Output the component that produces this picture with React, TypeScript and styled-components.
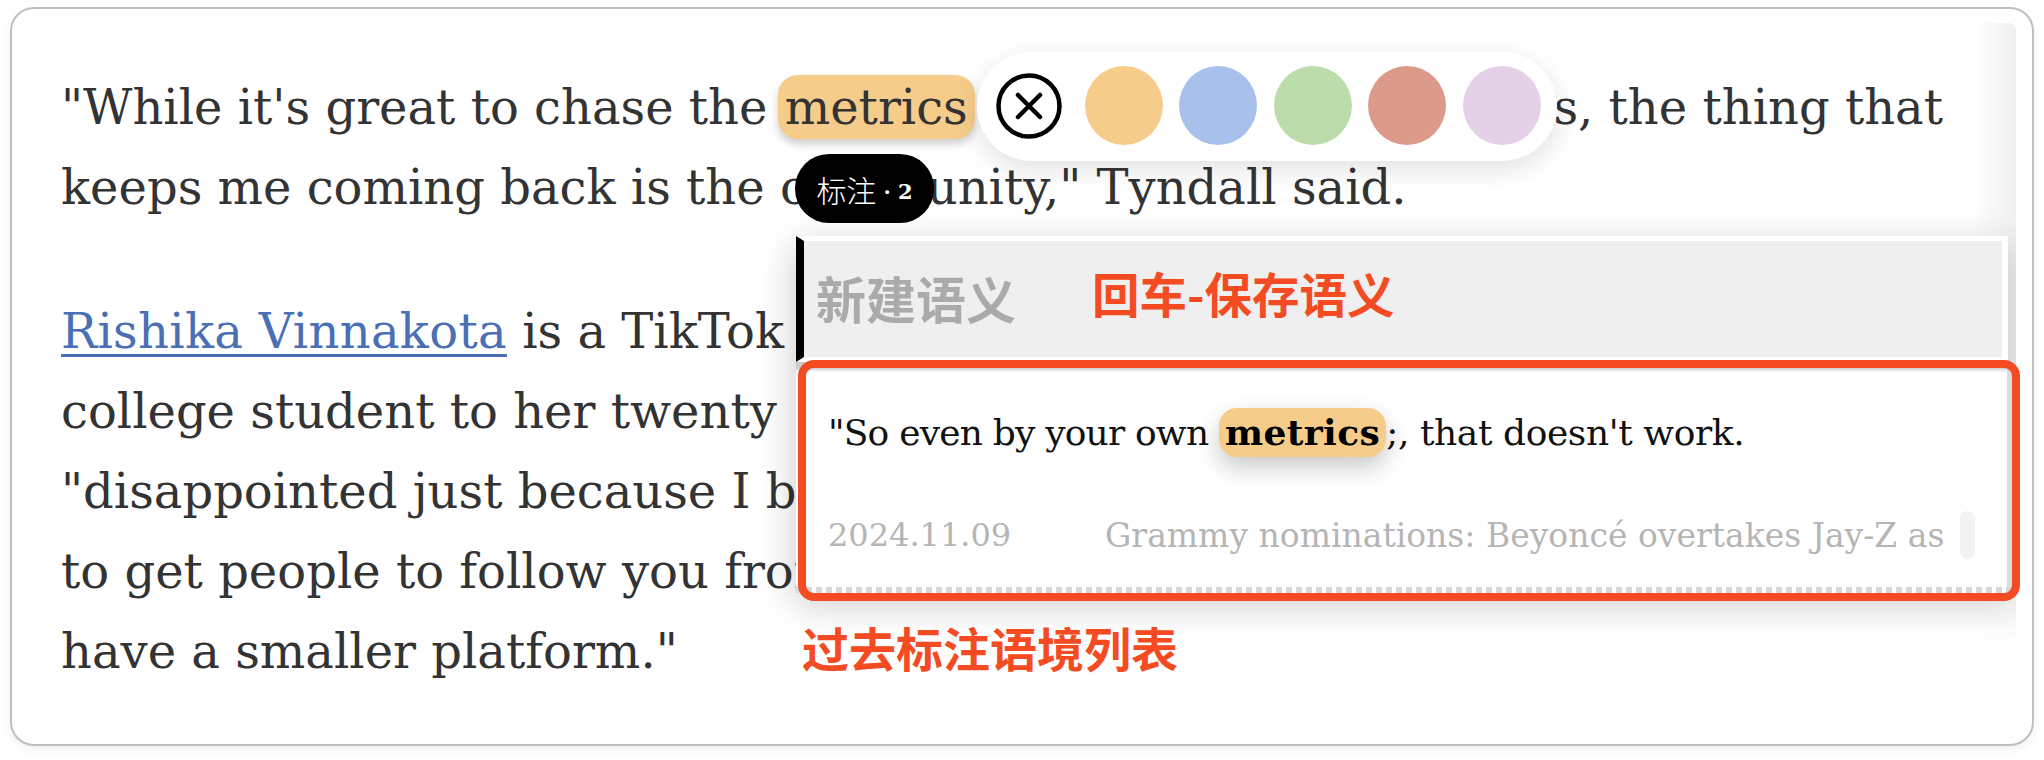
import React from "react";
import styled, { createGlobalStyle } from "styled-components";

const GlobalStyle = createGlobalStyle`
  html, body {
    margin: 0;
    background: white;
  }
  body {
    width: 2044px;
    height: 760px;
    overflow: hidden;
    font-family: "DejaVu Serif", "Noto Sans CJK SC", serif;
  }
`;

const Page = styled.div`
  padding: 7px 10px 0;
`;

const Card = styled.div`
  position: relative;
  box-sizing: border-box;
  width: 2024px;
  height: 739px;
  padding: 14px 16px 16px;
  background: white;
  border: 2px solid #bfbfbf;
  border-radius: 24px;
  box-shadow: 0 4px 8px rgba(0, 0, 0, 0.06);
`;

const Content = styled.div`
  position: relative;
  height: 100%;
  box-sizing: border-box;
  padding: 44px 0 0 33px;
  overflow: hidden;
  border-radius: 8px;
  background: linear-gradient(to bottom, transparent 540px, white 630px),
    linear-gradient(to right, white calc(100% - 42px), #f0f0f0);
`;

const Paragraph = styled.div`
  margin-bottom: 64px;
`;

const Line = styled.div`
  display: flex;
  justify-content: space-between;
  width: 1882px;
  height: 80px;
  line-height: 80px;
  font-size: 48px;
  color: #333;
  white-space: pre;
`;

const Highlight = styled.span`
  display: inline-block;
  height: 64px;
  margin-left: -5px;
  padding: 0 7px;
  line-height: 64px;
  background: #f6cc8a;
  border-radius: 20px;
  box-shadow: 0 5px 8px rgba(0, 0, 0, 0.2);
`;

const Link = styled.span`
  color: #4a6fb5;
  letter-spacing: 0.3px;
  text-decoration: underline;
  text-decoration-thickness: 3px;
  text-underline-offset: 6px;
`;

const Toolbar = styled.div`
  position: absolute;
  left: 949px;
  top: 29px;
  display: flex;
  gap: 16.5px;
  box-sizing: border-box;
  width: 580px;
  height: 109px;
  padding: 14px 13px;
  background: white;
  border-radius: 55px;
  box-shadow: 0 8px 28px rgba(0, 0, 0, 0.12);
`;

const CloseButton = styled.div`
  display: flex;
  align-items: center;
  justify-content: center;
  width: 78px;
  height: 79px;
`;

const ColorDot = styled.div<{ $color: string }>`
  width: 78px;
  height: 79px;
  border-radius: 50%;
  background: ${(p) => p.$color};
`;

const CountBadge = styled.div`
  position: absolute;
  left: 767px;
  top: 131px;
  display: flex;
  align-items: center;
  justify-content: center;
  gap: 7px;
  width: 139px;
  height: 69px;
  background: black;
  border-radius: 34px;
  color: white;
  font-family: "Noto Sans CJK SC", sans-serif;
  font-size: 30px;
  font-weight: 300;
`;

const BadgeCount = styled.span`
  padding-top: 5px;
  font-family: "DejaVu Serif", serif;
  font-size: 21px;
  font-weight: 700;
`;

const Panel = styled.div`
  position: absolute;
  left: 768px;
  top: 213px;
  width: 1212px;
  background: white;
  box-shadow: 0 10px 36px rgba(0, 0, 0, 0.22);
`;

const SenseInput = styled.div`
  display: flex;
  align-items: center;
  gap: 76px;
  box-sizing: border-box;
  height: 126px;
  padding: 0 12px 4px;
  background: #efefef;
  background-clip: padding-box;
  border-left: 8px solid black;
  border-top: 5px solid white;
  border-right: 6px solid white;
  border-bottom: 5px solid white;
`;

const Placeholder = styled.span`
  font-family: "Noto Sans CJK SC", sans-serif;
  font-size: 50px;
  font-weight: 700;
  color: #aaa;
`;

const Note = styled.span`
  font-family: "Noto Sans CJK SC", sans-serif;
  font-size: 47.5px;
  font-weight: 700;
  line-height: 60px;
  color: #f44b22;
`;

const EnterHint = styled(Note)`
  margin-top: -8px;
`;

const ContextList = styled.div`
  box-sizing: border-box;
  height: 225px;
  margin-right: -4px;
  padding: 46px 0 0 32px;
  background: white;
  box-shadow: inset 0 11px 3px -3px #ccc, inset -5px 0 0 #ddd;
`;

const Quote = styled.div`
  height: 50px;
  line-height: 50px;
  font-size: 36px;
  letter-spacing: -0.8px;
  color: #111;
  white-space: pre;
`;

const QuoteMark = styled.span`
  display: inline-block;
  height: 49px;
  padding: 0 6px;
  line-height: 49px;
  font-weight: 700;
  letter-spacing: 0.4px;
  color: black;
  background: #f6cc8a;
  border-radius: 18px;
  box-shadow: 0 10px 24px rgba(0, 0, 0, 0.22);
`;

const QuoteTail = styled.span`
  letter-spacing: -0.4px;
`;

const Meta = styled.div`
  display: flex;
  align-items: center;
  height: 50px;
  margin-top: 52px;
  color: #b5b5b5;
  white-space: pre;
`;

const MetaDate = styled.span`
  width: 277px;
  flex: none;
  font-size: 32px;
`;

const MetaTitle = styled.span`
  width: 848px;
  flex: none;
  overflow: hidden;
  font-size: 33px;
`;

const MetaHandle = styled.span`
  width: 15px;
  height: 48px;
  margin-left: 7px;
  background: #f3f3f3;
  border-radius: 8px;
`;

const DashedEdge = styled.div`
  height: 6px;
  margin-right: -4px;
  background: repeating-linear-gradient(to right, #d8d8d8 0 6px, white 6px 10px);
`;

const RedFrame = styled.div`
  position: absolute;
  left: 786px;
  top: 351px;
  box-sizing: border-box;
  width: 1222px;
  height: 241px;
  border: 8px solid #f44b22;
  border-radius: 16px;
  pointer-events: none;
`;

const Caption = styled(Note)`
  position: absolute;
  left: 790px;
  top: 608px;
  font-size: 47px;
`;

const colors = ["#f6cc8a", "#a8c0ec", "#bcdcab", "#dc9b8a", "#e4d1e8"];

const CloseIcon = () => (
  <svg width="66" height="66" viewBox="0 0 66 66" fill="none" stroke="black" strokeWidth="4.5" strokeLinecap="round">
    <circle cx="33" cy="33" r="30.5" />
    <path d="M22 22L44 44M44 22L22 44" />
  </svg>
);

export default function App() {
  return (
    <Page>
      <GlobalStyle />
      <Card>
        <Content>
          <Paragraph>
            <Line>
              <span>
                {'"While it\'s great to chase the '}
                <Highlight>metrics</Highlight>
                {" and follower count"}
              </span>
              <span>s, the thing that</span>
            </Line>
            <Line>{'keeps me coming back is the community," Tyndall said.'}</Line>
          </Paragraph>
          <Paragraph>
            <Line>
              <span>
                <Link>Rishika Vinnakota</Link> is a TikTok creator who went from being a
              </span>
            </Line>
            <Line>{"college student to her twenty  million followers. She is not"}</Line>
            <Line>{'"disappointed just because I bought followers," she said.'}</Line>
            <Line>to get people to follow you from the very start, even if you</Line>
            <Line>{'have a smaller platform."'}</Line>
          </Paragraph>

          <Toolbar>
            <CloseButton>
              <CloseIcon />
            </CloseButton>
            {colors.map((color) => (
              <ColorDot key={color} $color={color} />
            ))}
          </Toolbar>

          <CountBadge>
            标注
            <BadgeCount>· 2</BadgeCount>
          </CountBadge>

          <Panel>
            <SenseInput>
              <Placeholder>新建语义</Placeholder>
              <EnterHint>回车-保存语义</EnterHint>
            </SenseInput>
            <ContextList>
              <Quote>
                {'"So even by your own '}
                <QuoteMark>metrics</QuoteMark>
                <QuoteTail>{";, that doesn't work."}</QuoteTail>
              </Quote>
              <Meta>
                <MetaDate>2024.11.09</MetaDate>
                <MetaTitle>Grammy nominations: Beyoncé overtakes Jay-Z as</MetaTitle>
                <MetaHandle />
              </Meta>
            </ContextList>
            <DashedEdge />
          </Panel>
        </Content>
        <RedFrame />
        <Caption>过去标注语境列表</Caption>
      </Card>
    </Page>
  );
}
